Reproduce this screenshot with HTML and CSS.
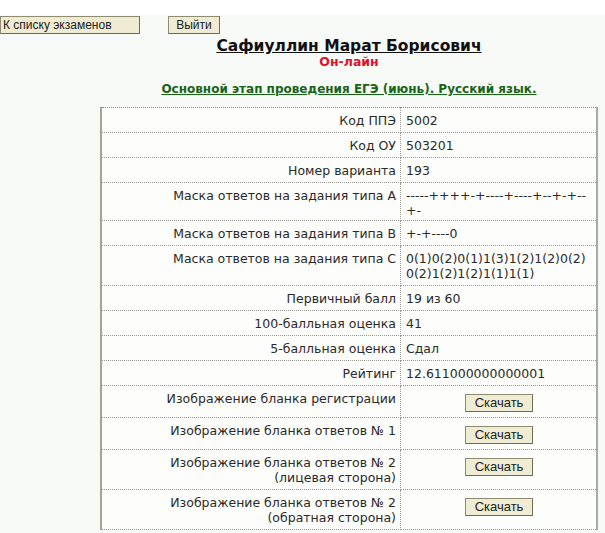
FILE: index.html
```html
<!DOCTYPE html>
<html lang="ru">
<head>
<meta charset="utf-8">
<link rel="stylesheet" href="styles.css">
</head>
<body>
<div class="topbar">
  <button class="btn btn-list">К списку экзаменов</button>
  <button class="btn btn-exit">Выйти</button>
</div>
<div class="main">
  <div class="name">Сафиуллин Марат Борисович</div>
  <div class="online">Он-лайн</div>
  <div class="exam">Основной этап проведения ЕГЭ (июнь). Русский язык.</div>
  <table class="results">
    <tr><td class="lbl">Код ППЭ</td><td class="val">5002</td></tr>
    <tr><td class="lbl">Код ОУ</td><td class="val">503201</td></tr>
    <tr><td class="lbl">Номер варианта</td><td class="val">193</td></tr>
    <tr class="row-a"><td class="lbl">Маска ответов на задания типа A</td><td class="val">-----++++-+----+----+--+-+--<br>+-</td></tr>
    <tr><td class="lbl">Маска ответов на задания типа B</td><td class="val">+-+----0</td></tr>
    <tr><td class="lbl">Маска ответов на задания типа C</td><td class="val mask-c">0(1)0(2)0(1)1(3)1(2)1(2)0(2)<br>0(2)1(2)1(2)1(1)1(1)</td></tr>
    <tr><td class="lbl">Первичный балл</td><td class="val">19 из 60</td></tr>
    <tr><td class="lbl">100-балльная оценка</td><td class="val">41</td></tr>
    <tr><td class="lbl">5-балльная оценка</td><td class="val">Сдал</td></tr>
    <tr><td class="lbl">Рейтинг</td><td class="val">12.611000000000001</td></tr>
    <tr><td class="lbl">Изображение бланка регистрации</td><td class="val center"><button class="btn btn-dl">Скачать</button></td></tr>
    <tr><td class="lbl">Изображение бланка ответов № 1</td><td class="val center"><button class="btn btn-dl">Скачать</button></td></tr>
    <tr><td class="lbl">Изображение бланка ответов № 2<br>(лицевая сторона)</td><td class="val center"><button class="btn btn-dl">Скачать</button></td></tr>
    <tr><td class="lbl">Изображение бланка ответов № 2<br>(обратная сторона)</td><td class="val center"><button class="btn btn-dl">Скачать</button></td></tr>
  </table>
</div>
</body>
</html>
```

FILE: styles.css
```css
html, body {
  margin: 0;
  padding: 0;
}
body {
  background: linear-gradient(#ffffff 0, #ffffff 15px, #f7faf7 15px);
  font-family: "DejaVu Sans", Verdana, sans-serif;
  font-size: 12.5px;
  color: #2a2a2a;
  width: 605px;
  height: 533px;
  overflow: hidden;
}
.topbar {
  padding-top: 16px;
  display: flex;
  gap: 28px;
  height: 18px;
}
.btn {
  font-family: "Liberation Sans", Arial, sans-serif;
  font-size: 12px;
  color: #222;
  background: #efecd3;
  border: 1px solid #8e8c6e;
  border-right-color: #6e6c52;
  border-bottom-color: #6e6c52;
  height: 18px;
  padding: 0 2px;
  margin: 0;
  line-height: 16px;
}
.btn-list {
  width: 140px;
  text-align: left;
  padding-left: 2px;
}
.btn-exit {
  width: 52px;
}
.main {
  margin-left: 100px;
  width: 498px;
  text-align: center;
}
.name {
  margin-top: 3px;
  font-size: 15.5px;
  font-weight: bold;
  line-height: 18px;
  color: #111;
  text-decoration: underline;
}
.online {
  font-size: 12.5px;
  font-weight: bold;
  line-height: 14px;
  color: #e0102a;
}
.exam {
  margin-top: 13px;
  font-size: 12px;
  font-weight: bold;
  line-height: 15px;
  color: #176417;
  text-decoration: underline;
}
.results {
  margin-top: 10px;
  width: 498px;
  border-collapse: collapse;
  background: #fdfdfb;
  border-left: 2px solid #a6a68a;
  border-right: 2px solid #a8a8a4;
  border-top: 1px dotted #8a8a7a;
}
.results td {
  border-bottom: 1px dotted #9a9a92;
  padding: 5px 4px 4px 5px;
  line-height: 15px;
  vertical-align: top;
}
.results .row-a td {
  padding-bottom: 2px;
}
.lbl {
  width: 289px;
  text-align: right;
  border-right: 1px dotted #9a9a92;
}
.val {
  text-align: left;
}
.val.center {
  text-align: center;
}
.mask-c {
  padding-top: 6px;
  line-height: 14px;
}
.btn-dl {
  width: 68px;
  font-size: 13px;
  text-align: center;
  margin: 3px 0 1px;
}
```
